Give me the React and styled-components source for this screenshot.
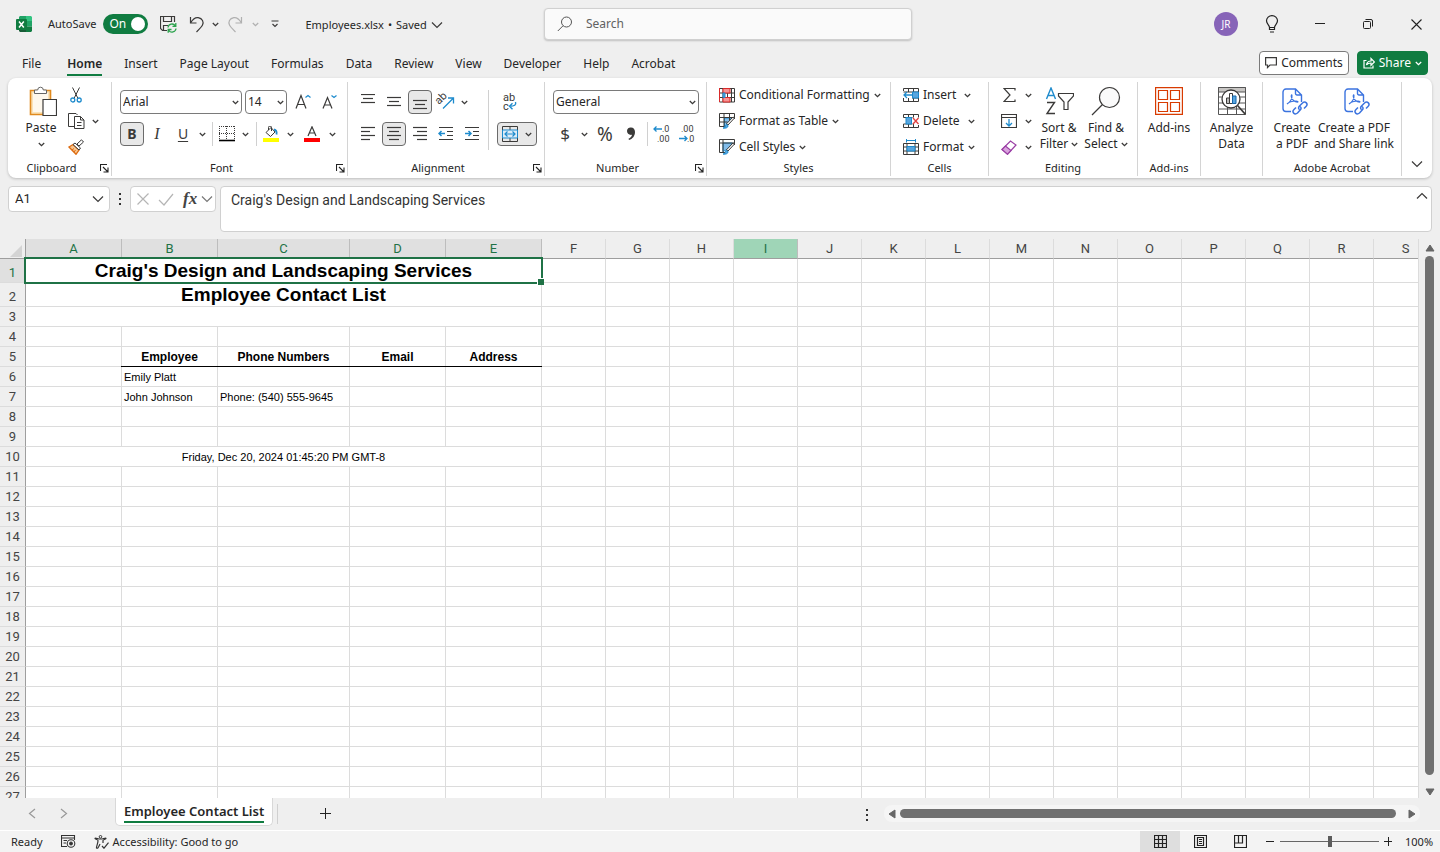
import React, { useState } from 'react';
import styled, { createGlobalStyle, css } from 'styled-components';

const DARK = '#3b3a39';
const BLUE = '#1e8bcd';
const GREEN = '#107c41';

/* ---------- icons ---------- */

const Svg = ({ w = 16, h = w, stroke = DARK, sw = 1, children }) => (
  <svg
    width={w}
    height={h}
    viewBox={`0 0 ${w} ${h}`}
    fill="none"
    stroke={stroke}
    strokeWidth={sw}
    aria-hidden="true"
  >
    {children}
  </svg>
);

const ChevronIcon = ({ color = DARK }) => (
  <Svg w={7} h={5} stroke={color} sw={1.3}>
    <path d="M.8 1l2.7 2.6L6.2 1" />
  </Svg>
);

const WideChevron = ({ color = DARK, up }) => (
  <Svg w={12} h={8} stroke={color} sw={1.2}>
    <path d={up ? 'M1 6.5L6 1.5l5 5' : 'M1 1.5l5 5 5-5'} />
  </Svg>
);

const ExcelIcon = () => (
  <Svg w={16} stroke="none">
    <path d="M4 0h6v8H3V1z" fill="#21a366" />
    <path d="M10 0h5l1 1v4h-6z" fill="#33c481" />
    <path d="M3 5h7v5H3z" fill="#107c41" />
    <path d="M10 5h6v5.500h-6z" fill="#21a366" />
    <path d="M3 10h7v6H4l-1-1z" fill="#185c37" />
    <path d="M10 10.500h6V15l-1 1h-5z" fill="#107c41" />
    <rect x="0" y="3" width="11" height="11" rx="1" fill="#107c41" />
    <path d="M3 5.500l4.800 6M7.800 5.500l-4.800 6" stroke="#fff" strokeWidth="1.500" />
  </Svg>
);

const SaveIcon = () => (
  <Svg w={17} h={17}>
    <path d="M7 14.500H2.500L.5 12.500V.5h14V6M3.500.5v5h8v-5M3.500 14.500V9.500H8" strokeWidth="1.200" />
    <path d="M8 11.500a4 4 0 0 1 7.300-1.700M15.800 7v3.300h-3.300M16 12.500a4 4 0 0 1-7.300 1.800M8.200 16.800v-3.300h3.300" stroke="#2ea44f" strokeWidth="1.300" />
  </Svg>
);

const UndoIcon = ({ flip, color = DARK }) => (
  <Svg w={16} h={17} stroke={color} sw={1.2}>
    <path
      d={
        flip
          ? 'M14.500 1v6h-6M14.200 6.500C12 3 9.500 1.200 6.800 1.700 2.500 2.500 1 6 2.500 9c1 2 3 4 6 7'
          : 'M1.500 1v6h6M1.800 6.500C4 3 6.500 1.200 9.200 1.700c4.300.8 5.800 4.300 4.300 7.300-1 2-3 4-6 7'
      }
    />
  </Svg>
);

const CustomizeIcon = () => (
  <Svg w={8} h={8} sw={1.2}>
    <path d="M.5 1h7M1.500 4L4 6.400 6.500 4" />
  </Svg>
);

const SearchIcon = () => (
  <Svg w={16} stroke="#555">
    <circle cx="9.500" cy="6" r="5" />
    <path d="M6 9.800L.8 15" />
  </Svg>
);

const BulbIcon = () => (
  <Svg w={14} h={18} stroke="#222" sw={1.2}>
    <path d="M4.500 12.500C4.500 10 1.500 9 1.500 5.800a5.500 5.200 0 0 1 11 0c0 3.200-3 4.200-3 6.700zM4.500 12.500v2h5v-2M5 17h4" />
  </Svg>
);

const PasteIcon = () => (
  <Svg w={32} h={31}>
    <g transform="translate(4 0)">
      <path d="M1.500 4.500h20v24h-20z" fill="#fbe3b8" stroke="#e08a1e" strokeWidth="1.600" />
      <path d="M4 7h15v19H4z" fill="#fff" stroke="none" opacity=".75" />
      <path d="M5.500 7.500V4h3.200a2.800 2.800 0 0 1 5.600 0h3.200v3.500z" fill="#fff" stroke="#666" />
      <path d="M14 13.500h13.500v16H14z" fill="#fff" stroke={DARK} strokeWidth="1.200" />
    </g>
  </Svg>
);

const CutIcon = () => (
  <Svg w={12} h={16}>
    <path d="M2.500.5l5.500 11M9.500.5L4 11.500" />
    <circle cx="2.800" cy="13" r="2" stroke={BLUE} strokeWidth="1.300" />
    <circle cx="9.200" cy="13" r="2" stroke={BLUE} strokeWidth="1.300" />
  </Svg>
);

const CopyIcon = () => (
  <Svg w={17} h={16}>
    <path d="M6 13.500H.5v-13H8l1.500 1.500" />
    <path d="M6.500 3.500h6l3.500 3.500v8.500H6.500zM12.500 3.500V7H16M9 9.500h4.500M9 12.500h4.500" />
  </Svg>
);

const BrushIcon = () => (
  <Svg w={16} h={16}>
    <path d="M1 8l4-2.500 6 5.500-3 4.300z" fill="#f7c690" stroke="#dd6b10" strokeWidth="1.300" />
    <path d="M4 11l2-1.500M6 13l1.500-2" stroke="#dd6b10" />
    <path d="M5 5.500l2-1.500 5.500 5-1.500 2zM9 5l4.500-4.200L15.500 3l-4.500 4z" fill="#fff" />
  </Svg>
);

const GrowFontIcon = ({ down }) => (
  <Svg w={17} h={16}>
    {down ? (
      <path d="M1 14.500L5.500 3.500l4.500 11M2.500 11h6" strokeWidth="1.200" />
    ) : (
      <path d="M1 14.500L6 1.500l5 13M2.700 10.500h6.600" strokeWidth="1.200" />
    )}
    <path d={down ? 'M9.500 1.500l2.500 2 2.500-2' : 'M10.500 3.500l2.500-2 2.500 2'} stroke={BLUE} strokeWidth="1.200" />
  </Svg>
);

const BorderIcon = () => (
  <Svg w={16}>
    <path d="M0 .5h16M0 7.500h16M.5 0v14M7.500 0v14M15.500 0v14" strokeDasharray="1 1" />
    <path d="M0 14.500h16" stroke="#000" strokeWidth="1.600" />
  </Svg>
);

const FillIcon = () => (
  <Svg w={16}>
    <path d="M3 6.500L8 1.500l4 4.500-4.500 4.500zM5.500 4V1.500a1.500 1.500 0 0 1 3 0V5" />
    <path d="M11 3.500c2.500.5 3 2 2.500 5" stroke={BLUE} strokeWidth="1.800" />
    <path d="M0 12h16v4H0z" fill="#ff0" stroke="none" />
  </Svg>
);

const FontColorIcon = () => (
  <Svg w={16}>
    <path d="M4 10L8 .8 12 10M5.500 7h5" strokeWidth="1.200" />
    <path d="M0 12h16v4H0z" fill="#f00" stroke="none" />
  </Svg>
);

const LinesIcon = ({ lines }) => (
  <Svg w={16}>
    {lines.map(([x, y, len]) => (
      <path key={y} d={`M${x} ${y}.5h${len}`} strokeWidth="1.200" />
    ))}
  </Svg>
);

const TOP = [[1, 0, 14], [3, 4, 10], [1, 8, 14]];
const MIDDLE = [[1, 3, 14], [3, 7, 10], [1, 11, 14]];
const BOTTOM = [[1, 6, 14], [3, 10, 10], [1, 14, 14]];
const LEFT = [[1, 1, 14], [1, 5, 9], [1, 9, 14], [1, 13, 9]];
const CENTER = [[1, 1, 14], [3, 5, 10], [1, 9, 14], [3, 13, 10]];
const RIGHT = [[1, 1, 14], [5, 5, 10], [1, 9, 14], [5, 13, 10]];

const OrientIcon = () => (
  <Svg w={22} h={24}>
    <text x="5" y="15" transform="rotate(-45 5 15)" fontFamily="Roboto" fontSize="11" fill={DARK} stroke="none">ab</text>
    <path d="M9 18.500L19 8.500M14 8h5.500v5.500" stroke={BLUE} strokeWidth="1.300" />
  </Svg>
);

const IndentIcon = ({ out }) => (
  <Svg w={16}>
    <path d="M1 1.500h14M9 5.500h6M9 9.500h6M1 13.500h14" strokeWidth="1.200" />
    <path d={out ? 'M7 7.500H1M3.500 5L1 7.500 3.500 10' : 'M1 7.500h6M4.500 5L7 7.500 4.500 10'} stroke={BLUE} strokeWidth="1.500" />
  </Svg>
);

const WrapIcon = () => (
  <Svg w={18} h={24}>
    <text x="3" y="11" fontFamily="Roboto" fontSize="11" fill={DARK} stroke="none">ab</text>
    <text x="3" y="20" fontFamily="Roboto" fontSize="11" fill={DARK} stroke="none">c</text>
    <path d="M15.500 12c1 3-1 4.200-6 4.200M12.500 13.300l-3 2.900 3 3" stroke={BLUE} strokeWidth="1.400" />
  </Svg>
);

const MergeIcon = () => (
  <Svg w={16}>
    <path d="M.5.5h15v15H.5zM8 .5V4M8 12v3.500" />
    <path d="M.5 4h15v8H.5z" fill="#dcecf8" stroke={BLUE} />
    <path d="M3 8h10M5.500 5.500L3 8l2.500 2.500M10.500 5.500L13 8l-2.500 2.500" stroke={BLUE} strokeWidth="1.200" />
  </Svg>
);

const DecimalIcon = ({ less }) => (
  <Svg w={20} h={22}>
    <text x={less ? 4 : 9} y="9" fontFamily="Roboto" fontSize="9" fill={DARK} stroke="none">{less ? '.00' : '.0'}</text>
    <text x={less ? 10 : 4} y="19" fontFamily="Roboto" fontSize="9" fill={DARK} stroke="none">{less ? '.0' : '.00'}</text>
    <path
      d={less ? 'M2 15.500h8M7.500 13L10 15.500 7.500 18' : 'M9 6H1M3.500 3.500L1 6l2.500 2.500'}
      stroke={BLUE}
      strokeWidth="1.300"
    />
  </Svg>
);

const CommaIcon = () => (
  <Svg w={10} h={14} stroke="none">
    <path d="M1 4a3.500 3.500 0 0 1 4-3.500c2.500 0 4 2 4 4.500 0 4-2.500 7-6 8l-.5-1.200C4.500 11 5.800 9.500 6 7.800 3 8.300 1 6.500 1 4z" fill={DARK} />
  </Svg>
);

const CondFormatIcon = () => (
  <Svg w={16} h={15}>
    <path d="M.5.5h15v13.500H.5zM.5 5h15M.5 9.500h15M4 .5V14M8.500.5V14M12.500.5V14" />
    <path d="M4 .5h7V5H4zM4 9.500h7V14H4z" fill="#f79292" stroke="#d92b2b" />
    <path d="M4 5h2v4.500H4z" fill="#58a6df" stroke={BLUE} />
    <path d="M.5 0v14" stroke="#d92b2b" />
  </Svg>
);

const TableBrushIcon = ({ grid }) => (
  <Svg w={16} h={16}>
    <path d="M15.500 6V.5H.5v13H6" />
    <path d={grid ? 'M5.500 5h7.500l-5 6v2.500H5.500z' : 'M4 4h9.500L8 10.500l-4 2z'} fill="#83bdea" stroke={BLUE} />
    {grid ? <path d="M.5 4.500h15M.5 9h8M5 .5v13M10.500.5v8" /> : <path d="M.5 4h15M4 .5v13" />}
    <path d="M15.500 5L9 12l-1.500-1.200L14 4z" fill="#fff" />
    <path d="M4 15c2 0 2-1 2.500-2.500S9 11.500 9 13s-2 2.500-5 2z" fill="#58a6df" stroke={BLUE} />
  </Svg>
);

const CellsIcon = ({ kind }) => (
  <Svg w={16} h={16}>
    {kind === 'insert' && (
      <>
        <path d="M.5 4V1.500h15v13H.5V11M.5 5h15M9 11h6.500M5.500 1.500V5M10.500 1.500V5M5.500 11v3.500M10.500 11v3.500" />
        <path d="M9.500 5h6v6h-6z" fill="#58a6df" stroke={BLUE} />
        <path d="M9 8H1M4 5L1 8l3 3" stroke={BLUE} strokeWidth="1.300" />
      </>
    )}
    {kind === 'delete' && (
      <>
        <path d="M.5 4.500v-3h15v3M.5 11v3.500h15V12M.5 4.500h9M.5 11h9M5.500 1.500v3M10.500 1.500v3M5.500 11v3.500M10.500 11v3.500" />
        <path d="M3 4.500h5.500V11H3z" fill="#58a6df" stroke={BLUE} />
        <path d="M10 5l5.500 6M15.500 5L10 11" stroke="#e04040" strokeWidth="1.300" />
      </>
    )}
    {kind === 'format' && (
      <>
        <path d="M.5 4.500h15v11H.5zM.5 8h15M.5 12h15M4 4.500v11M12 4.500v11" />
        <path d="M4 7.500h8V12H4z" fill="#58a6df" stroke={BLUE} />
        <path d="M3.500 0v3.500M12.500 0v3.500M3.500 1.500h9" stroke={BLUE} />
      </>
    )}
  </Svg>
);

const SumIcon = () => (
  <Svg w={13} h={14}>
    <path d="M12 2.500v-2H1l6 6.500-6 6.500h11v-2" strokeWidth="1.200" />
  </Svg>
);

const FillDownIcon = () => (
  <Svg w={16} h={14}>
    <path d="M.5.5h15v13H.5zM.5 3.500h15" strokeWidth="1.200" />
    <path d="M8 5v7M5 9l3 3 3-3" stroke={BLUE} strokeWidth="1.300" />
  </Svg>
);

const EraserIcon = () => (
  <Svg w={16} h={15} stroke="#9b3fa5" sw={1.2}>
    <path d="M1 9.500L9.500 1 15 5l-8.500 9.200z" fill="#fff" />
    <path d="M1 9.500L4.500 6l5.500 4.500-3.500 3.700z" fill="#d9a3de" />
  </Svg>
);

const SortFilterIcon = () => (
  <Svg w={29} h={28}>
    <path d="M1.500 12L6 1l4.500 11M3 8.500h6" stroke={BLUE} strokeWidth="1.400" />
    <path d="M2 15.500h7.500L2 26.500h8" strokeWidth="1.400" />
    <path d="M13.500 6.500h15V9l-5.500 6v7.500h-4V15l-5.500-6z" strokeWidth="1.200" />
  </Svg>
);

const FindIcon = () => (
  <Svg w={30} h={30}>
    <circle cx="18.500" cy="11.500" r="10" fill="#fafafa" strokeWidth="1.200" />
    <path d="M11.500 18.500L1 29" strokeWidth="1.300" />
  </Svg>
);

const AddinsIcon = () => (
  <Svg w={28} h={28} stroke="#d83b01" sw={1.2}>
    <path d="M.6.600h26.800v26.800H.6zM3.500 3.500h9v9h-9zM15.500 3.500h9v9h-9zM3.500 15.500h9v9h-9zM15.500 15.500h9v9h-9z" />
  </Svg>
);

const AnalyzeIcon = () => (
  <Svg w={28} h={28}>
    <path d="M.5.5h27v27H.5zM.5 10h27M.5 16h27M.5 22h27M9.500 16v11.500M18.500 16v11.500" stroke="#555" />
    <path d="M.5.5h27V5H.5z" fill="#c8c6c4" stroke="#555" />
    <circle cx="13" cy="12" r="9" fill="#fff" strokeWidth="1.300" />
    <path d="M8.500 11h3v5.500h-3z" fill="#bbb" />
    <path d="M11.500 6.500h3v10h-3z" fill="#fff" />
    <path d="M14.500 9h3.500v7.500h-3.500z" fill="#58a6df" stroke="#1565a8" />
    <path d="M19.500 18.500l8 9" strokeWidth="1.600" />
  </Svg>
);

const PdfIcon = () => (
  <Svg w={32} h={32} stroke="#3b73df" sw={1.4}>
    <g transform="translate(6 3)">
      <path d="M9 23.500H4A3 3 0 0 1 1 20.500V4a3 3 0 0 1 3-3h9.500l6 6v7M13.500 1v4.500a1.500 1.500 0 0 0 1.500 1.500h4.500" />
      <path d="M5 16c3-1.500 5.500-5.500 5-8.500-.3-1.500-1.300 0-.5 2 1 2.500 3.500 4.500 6 4.700 1 0 .5-1.200-1.500-1.200-3 0-6.500.5-9 3z" strokeWidth="1.100" />
      <path d="M17.500 21.500c-1.500-1-1-2.500 0-3.500l3-3c3-2.500 6 1 3.500 3.500l-2 2M18 18.500c1.500 1 1.300 2.500.2 3.500l-2.700 3c-3 2.500-6-1-3.500-3.500l2-2" strokeWidth="1.500" />
    </g>
  </Svg>
);

const LauncherIcon = () => (
  <Svg w={9} h={9} sw={1.1}>
    <path d="M.5 7V.5H7M3 3l4.500 4.500M8 3.500V8H3.500" stroke="#222" />
  </Svg>
);

const CommentIcon = () => (
  <Svg w={12} h={12}>
    <path d="M.6.600h10.800v7.400H5L2.500 10.500V8H.6z" strokeWidth="1.200" />
  </Svg>
);

const ShareIcon = () => (
  <Svg w={12} h={12} stroke="#fff" sw={1.2}>
    <path d="M3.500 3.500H1V11h9V8.500M3.500 8c.3-2.500 1.800-4 4.500-4V1.500L11.500 5 8 8.300V6C6 6 4.500 6.500 3.500 8z" />
  </Svg>
);

const MacroIcon = () => (
  <Svg w={15} h={13} stroke="#333">
    <path d="M6 11.500H.5V.5h13V5M.5 3h13M2.500 5.500H6M2.500 8H5" strokeWidth="1.100" />
    <circle cx="10" cy="8.500" r="3.800" strokeWidth="1.100" />
    <circle cx="10" cy="8.500" r="1.500" fill="#333" />
  </Svg>
);

const AccessIcon = () => (
  <Svg w={15} h={14} stroke="#333">
    <circle cx="6.500" cy="1.800" r="1.300" />
    <path d="M1 3c-.5 1.500 3 1.500 3 2.500 0 3-1.500 5-1.500 7.500 1.500 1 2-1 3.500-4M12 3c.5 1.500-3 1.500-3 2.500V8M1 3c2 0 3 1 5.500 1S10 3 12 3M8 11l2 2.200 4.500-5.500" strokeWidth="1.200" />
  </Svg>
);

/* ---------- shared ---------- */

const GlobalStyle = createGlobalStyle`
  * { box-sizing: border-box; }
  body {
    margin: 0;
    overflow: hidden;
    background: #efefef;
    color: #262626;
    font: 12px/16px "Noto Sans", sans-serif;
  }
  button, input, select, textarea {
    font: inherit;
    color: inherit;
    border: 0;
    padding: 0;
    margin: 0;
    background: none;
    outline: none;
  }
  svg { display: block; flex: none; }
`;

const Window = styled.div`
  display: flex;
  flex-direction: column;
  height: 100vh;
`;

const IconButton = styled.button`
  display: flex;
  align-items: center;
  justify-content: center;
  flex: none;
  width: ${({ $w }) => $w || 24}px;
  height: 24px;
  border-radius: 4px;
  ${({ $on }) =>
    $on &&
    css`
      background: #e8e8e8;
      border: 1px solid #6b6b6b;
    `}
`;

/* ---------- title bar ---------- */

const TitleBar = styled.header`
  display: grid;
  grid-template-columns: 1fr minmax(180px, 368px) 1fr;
  align-items: center;
  height: 48px;
  padding-left: 16px;
`;

const TitleLeft = styled.div`
  display: flex;
  align-items: center;
  white-space: nowrap;
`;

const AutoSave = styled.label`
  display: flex;
  align-items: center;
  gap: 7px;
  margin: 0 10px 0 16px;
  font-size: 11px;
`;

const Toggle = styled.span`
  display: flex;
  align-items: center;
  justify-content: space-between;
  width: 45px;
  height: 20px;
  padding: 0 3px 0 6px;
  border-radius: 10px;
  background: ${GREEN};
  color: #fff;
  font-size: 12px;

  input {
    appearance: none;
    width: 14px;
    height: 14px;
    border-radius: 50%;
    background: #fff;
  }
`;

const QuickTools = styled.div`
  display: flex;
  align-items: center;
  gap: 5px;
  margin: 0 19px 0 10px;
`;

const FileName = styled.button`
  display: flex;
  align-items: center;
  gap: 4px;
  padding-top: 1px;
  font-size: 11px;
`;

const SearchBox = styled.label`
  display: flex;
  align-items: center;
  gap: 13px;
  height: 32px;
  padding: 0 12px;
  border: 1px solid #d0d0d0;
  border-radius: 4px;
  background: #fafafa;
  box-shadow: 0 1px 2px rgba(0, 0, 0, 0.2);

  input {
    flex: 1;
    min-width: 0;
    font-size: 12px;
  }
  input::placeholder {
    color: #616161;
    opacity: 1;
  }
`;

const TitleRight = styled.div`
  display: flex;
  justify-content: flex-end;
  align-items: center;
`;

const Avatar = styled.button`
  width: 24px;
  height: 24px;
  margin-right: 10px;
  border-radius: 50%;
  background: #8764b8;
  color: #fff;
  font-size: 10px;
`;

/* ---------- ribbon tabs ---------- */

const TabRow = styled.nav`
  display: flex;
  align-items: flex-end;
  height: 30px;
  padding: 0 12px 0 11px;
`;

const Tab = styled.button`
  height: 28px;
  padding: 0 11px;
  white-space: nowrap;
  font-weight: ${({ $active }) => ($active ? 600 : 400)};
  margin-right: ${({ $first }) => ($first ? 4 : 0)}px;

  span {
    display: block;
    padding: 4px 0 2px;
    border-bottom: 2px solid ${({ $active }) => ($active ? GREEN : 'transparent')};
  }
`;

const Actions = styled.div`
  display: flex;
  gap: 8px;
  margin: 0 0 3px auto;
`;

const ActionButton = styled.button`
  display: flex;
  align-items: center;
  gap: 4px;
  height: 24px;
  padding: 0 5px;
  border: 1px solid ${({ $primary }) => ($primary ? GREEN : '#7a7a7a')};
  border-radius: 4px;
  background: ${({ $primary }) => ($primary ? GREEN : '#fff')};
  color: ${({ $primary }) => ($primary ? '#fff' : '#262626')};
`;

/* ---------- ribbon ---------- */

const RibbonBar = styled.section`
  display: flex;
  flex: none;
  margin: 0 8px;
  padding: 4px 0 2px;
  border-radius: 8px;
  background: #fff;
  box-shadow: 0 1px 3px rgba(0, 0, 0, 0.22);
`;

const GroupBox = styled.div`
  display: flex;
  flex-direction: column;
  flex: none;
  width: ${({ $w }) => $w}px;
  border-right: 1px solid #d4d4d4;
`;

const GroupBody = styled.div`
  display: flex;
  justify-content: ${({ $center }) => ($center ? 'center' : 'flex-start')};
  height: 78px;
  padding-left: ${({ $pad = 8 }) => $pad}px;
`;

const GroupFooter = styled.div`
  display: flex;
  align-items: center;
  height: 16px;
  font-size: 11px;
  text-align: center;
  white-space: nowrap;

  span { flex: 1; }
  button {
    display: flex;
    justify-content: flex-end;
    width: 16px;
    padding-right: 2px;
  }
`;

const Group = ({ w, label, launcher, pad, center, children }) => (
  <GroupBox $w={w}>
    <GroupBody $pad={pad} $center={center}>{children}</GroupBody>
    <GroupFooter>
      <span>{label}</span>
      {launcher && (
        <button aria-label={`${label} settings`}>
          <LauncherIcon />
        </button>
      )}
    </GroupFooter>
  </GroupBox>
);

const TwoRows = styled.div`
  display: flex;
  flex-direction: column;
  gap: 8px;
  padding: 8px 0 0 ${({ $pad = 0 }) => $pad}px;
`;

const ThreeRows = styled.div`
  display: flex;
  flex-direction: column;
  height: 78px;
`;

const Row = styled.div`
  display: flex;
  align-items: center;
  flex: none;
  gap: ${({ $gap = 0 }) => $gap}px;
  height: ${({ $h = 24 }) => $h}px;
`;

const Divider = styled.i`
  flex: none;
  width: 1px;
  height: ${({ $h = 24 }) => $h}px;
  margin: ${({ $top = 0 }) => $top}px 3px 0 4px;
  background: #d0d0d0;
`;

const Letter = styled.span`
  font-size: ${({ $size = 14 }) => $size}px;
  font-weight: ${({ $bold }) => ($bold ? 700 : 400)};
  font-style: ${({ $italic }) => ($italic ? 'italic' : 'normal')};
  font-family: ${({ $italic }) => ($italic ? '"Liberation Serif", serif' : 'inherit')};
  text-decoration: ${({ $underline }) => ($underline ? 'underline' : 'none')};
  text-underline-offset: 2px;
  color: ${DARK};
`;

const ComboBox = styled.div`
  display: grid;
  grid-template-columns: 1fr 9px;
  align-items: center;
  width: ${({ $w }) => $w}px;
  height: 24px;
  border: 1px solid #7a7a7a;
  border-radius: 4px;

  select {
    grid-area: 1 / 1 / 2 / 3;
    appearance: none;
    height: 22px;
    padding-left: 2px;
  }
  svg {
    grid-area: 1 / 2;
    pointer-events: none;
  }
`;

const Combo = ({ w, value, label }) => (
  <ComboBox $w={w}>
    <select aria-label={label} defaultValue={value}>
      <option>{value}</option>
    </select>
    <ChevronIcon />
  </ComboBox>
);

const Drop = ({ label, w = 14, color }) => (
  <IconButton $w={w} aria-label={label}>
    <ChevronIcon color={color} />
  </IconButton>
);

const MenuButton = styled.button`
  display: flex;
  align-items: center;
  gap: 4px;
  height: 26px;
  width: ${({ $w }) => ($w ? `${$w}px` : 'auto')};
  white-space: nowrap;

  svg:last-child {
    margin-left: ${({ $w }) => ($w ? 'auto' : 0)};
  }
`;

const BigButton = styled.button`
  display: flex;
  flex-direction: column;
  align-items: center;
  width: ${({ $w }) => $w}px;
  white-space: nowrap;
`;

const BigIcon = styled.span`
  display: flex;
  align-items: center;
  height: 38px;
`;

const Line = styled.span`
  display: flex;
  align-items: center;
  gap: 3px;
  height: 16px;
`;

const RibbonEnd = styled.div`
  display: flex;
  flex: 1;
  align-items: flex-end;
  justify-content: center;
`;

/* ---------- formula bar ---------- */

const FormulaRow = styled.div`
  display: flex;
  align-items: flex-start;
  flex: none;
  height: 61px;
  padding: 8px 8px 0;
  font-family: Roboto, sans-serif;
  font-size: 13px;
`;

const Field = styled.div`
  display: flex;
  align-items: center;
  width: ${({ $w }) => $w}px;
  height: 26px;
  padding: 0 5px 0 6px;
  border: 1px solid #d0d0d0;
  border-radius: 4px;
  background: #fff;

  input {
    flex: 1;
    min-width: 0;
  }
`;

const Dots = styled.span`
  display: grid;
  gap: 3px;
  width: ${({ $w }) => $w}px;
  padding-top: ${({ $top = 0 }) => $top}px;
  justify-content: center;

  i {
    width: 2px;
    height: 2px;
    background: #333;
  }
`;

const Fx = styled.span`
  font: italic bold 17px/20px "Liberation Serif", serif;
  color: #444;
`;

const FormulaField = styled.div`
  display: flex;
  flex: 1;
  align-items: flex-start;
  height: 46px;
  margin-left: 4px;
  padding: 5px 3px 0 10px;
  border: 1px solid #d0d0d0;
  border-radius: 4px;
  background: #fff;

  textarea {
    flex: 1;
    height: 34px;
    resize: none;
    font-size: 14px;
    color: #333;
  }
`;

/* ---------- sheet ---------- */

const Workspace = styled.main`
  display: flex;
  flex: 1;
  min-height: 0;
`;

const SheetView = styled.div`
  flex: 1;
  min-width: 0;
  overflow: hidden;
  background: #fff;
`;

const Grid = styled.table`
  width: 1438px;
  table-layout: fixed;
  border-collapse: separate;
  border-spacing: 0;
`;

const ColHead = styled.th`
  height: 20px;
  padding: 1px 0 0;
  border-right: 1px solid ${({ $state }) => ($state ? '#bdbdbd' : '#dcdcdc')};
  border-bottom: 1px solid #9e9e9e;
  background: ${({ $state }) =>
    $state === 'hover' ? '#9fd5b7' : $state === 'on' ? '#e0e0e0' : '#efefef'};
  color: ${({ $state }) => ($state ? '#1f7246' : '#444')};
  font: 400 13px/18px Roboto, sans-serif;
`;

const Corner = styled(ColHead)`
  border-right-color: #9e9e9e;

  svg { margin: 4px 0 0 10px; }
`;

const RowHead = styled.th`
  height: ${({ $h }) => $h}px;
  padding: ${({ $h }) => ($h > 20 ? 5 : 1)}px 0 0;
  border-right: 1px solid #9e9e9e;
  border-bottom: 1px solid #dcdcdc;
  background: ${({ $on }) => ($on ? '#e0e0e0' : '#efefef')};
  color: ${({ $on }) => ($on ? '#1f7246' : '#444')};
  font: 400 13px/18px Roboto, sans-serif;
`;

const Cell = styled.td`
  position: relative;
  padding: 1px 2px 0;
  border-right: 1px solid #dcdcdc;
  border-bottom: 1px solid #dcdcdc;
  color: #000;
  text-align: ${({ $center }) => ($center ? 'center' : 'left')};
  font: ${({ $bold }) => ($bold ? 700 : 400)} ${({ $size = 11 }) => $size}px/18px "Liberation Sans", Arial, sans-serif;
  white-space: nowrap;
  ${({ $rule }) =>
    $rule &&
    css`
      &::after {
        content: '';
        position: absolute;
        inset: auto -1px -1px -1px;
        height: 1px;
        background: #000;
      }
    `}
`;

const Selection = styled.span`
  position: absolute;
  inset: -2px;
  border: 2px solid #1f7246;
  pointer-events: none;
  z-index: 1;

  &::after {
    content: '';
    position: absolute;
    right: -3px;
    bottom: -3px;
    width: 6px;
    height: 6px;
    border: solid #fff;
    border-width: 1px 0 0 1px;
    background: #1f7246;
  }
`;

const VScroll = styled.div`
  display: flex;
  flex-direction: column;
  align-items: center;
  width: 22px;
  padding-top: 5px;
  border-left: 1px solid #dcdcdc;
`;

const Thumb = styled.div`
  flex: 1;
  border-radius: 5px;
  background: #707070;
  ${({ $vertical }) => ($vertical ? 'width: 9px; margin: 4px 0 13px;' : 'height: 9px; margin: 0 12px 0 4px;')}
`;

const VArrow = styled.div`
  padding-bottom: 2px;
`;

/* ---------- bottom bars ---------- */

const SheetTabs = styled.div`
  display: flex;
  align-items: flex-start;
  flex: none;
  height: 32px;
  padding-left: 16px;
`;

const NavButton = styled.button`
  display: flex;
  align-items: center;
  justify-content: center;
  width: 32px;
  height: 31px;
`;

const SheetTab = styled.button`
  height: 28px;
  padding: 0 8px;
  margin-left: 35px;
  border: 1px solid #d8d8d8;
  border-top: 0;
  border-radius: 0 0 5px 5px;
  background: #fff;
  font-size: 13px;
  font-weight: 600;
  white-space: nowrap;

  span {
    display: block;
    padding: 3px 0 2px;
    border-bottom: 2px solid ${GREEN};
  }
`;

const AddSheet = styled(NavButton)`
  margin-left: 28px;
`;

const SplitHandle = styled.div`
  display: flex;
  align-items: center;
  height: 33px;
  margin-left: auto;
`;

const HScroll = styled.div`
  display: flex;
  align-items: center;
  width: 536px;
  height: 17px;
  margin: 7px 20px 0 7px;
  padding: 0 4px;
  border-radius: 8px;
  background: #f5f5f5;
`;

const StatusBar = styled.footer`
  display: flex;
  align-items: center;
  flex: none;
  height: 22px;
  padding-left: 11px;
  border-top: 1px solid #fff;
  background: #f3f3f3;
  font-size: 11px;
`;

const StatusItem = styled.span`
  display: flex;
  align-items: center;
  gap: 4px;
  margin-right: 18px;
`;

const ViewControls = styled.div`
  display: flex;
  align-items: center;
  margin-left: auto;
`;

const ViewButton = styled.button`
  display: flex;
  align-items: center;
  justify-content: center;
  width: 40px;
  height: 21px;
  background: ${({ $on }) => ($on ? '#dedede' : 'transparent')};
`;

const ZoomGroup = styled.div`
  display: flex;
  align-items: center;
  padding-left: 6px;
`;

const ZoomRange = styled.input`
  appearance: none;
  width: 99px;
  height: 13px;
  margin: 0 5px;
  background: linear-gradient(#666, #666) center / 100% 1px no-repeat;

  &::-webkit-slider-thumb {
    appearance: none;
    width: 4px;
    height: 11px;
    background: #5c5c5c;
  }
`;

const Percent = styled.span`
  width: 47px;
  padding-left: 12px;
`;

/* ---------- data ---------- */

const TABS = ['File', 'Home', 'Insert', 'Page Layout', 'Formulas', 'Data', 'Review', 'View', 'Developer', 'Help', 'Acrobat'];

const COLUMNS = [
  ['A', 96], ['B', 96], ['C', 132], ['D', 96], ['E', 96],
  ...'FGHIJKLMNOPQRS'.split('').map((c) => [c, 64]),
];

const MERGED = {
  1: { text: "Craig's Design and Landscaping Services", size: 19, bold: true },
  2: { text: 'Employee Contact List', size: 19, bold: true },
  3: { text: '' },
  10: { text: 'Friday, Dec 20, 2024 01:45:20 PM GMT-8' },
};

const VALUES = {
  B5: 'Employee',
  C5: 'Phone Numbers',
  D5: 'Email',
  E5: 'Address',
  B6: 'Emily Platt',
  B7: 'John Johnson',
  C7: 'Phone: (540) 555-9645',
};

const ROWS = Array.from({ length: 27 }, (_, i) => i + 1);

const columnState = (name) => {
  if (name === 'I') return 'hover';
  return 'ABCDE'.includes(name) ? 'on' : undefined;
};

const ThreeDots = ({ w, top }) => (
  <Dots $w={w} $top={top}>
    <i /><i /><i />
  </Dots>
);

const Ribbon = () => (
  <RibbonBar>
    <Group w={104} label="Clipboard" launcher>
      <BigButton $w={50}>
        <BigIcon><PasteIcon /></BigIcon>
        <Line>Paste</Line>
        <Line><ChevronIcon /></Line>
      </BigButton>
      <ThreeRows>
        <Row $h={26}><IconButton $w={20} aria-label="Cut"><CutIcon /></IconButton></Row>
        <Row $h={26}>
          <IconButton $w={20} aria-label="Copy"><CopyIcon /></IconButton>
          <Drop label="Copy options" w={18} />
        </Row>
        <Row $h={26}><IconButton $w={20} aria-label="Format Painter"><BrushIcon /></IconButton></Row>
      </ThreeRows>
    </Group>

    <Group w={236} label="Font" launcher>
      <TwoRows>
        <Row $gap={3}>
          <Combo w={122} value="Arial" label="Font" />
          <Combo w={42} value="14" label="Font size" />
          <IconButton $w={26} aria-label="Increase font size"><GrowFontIcon /></IconButton>
          <IconButton $w={22} aria-label="Decrease font size"><GrowFontIcon down /></IconButton>
        </Row>
        <Row>
          <IconButton $on><Letter $bold>B</Letter></IconButton>
          <IconButton $w={26}><Letter $italic $size={16}>I</Letter></IconButton>
          <IconButton $w={26}><Letter $underline $size={14}>U</Letter></IconButton>
          <Drop label="Underline options" w={12} />
          <Divider />
          <IconButton $w={22} aria-label="Borders"><BorderIcon /></IconButton>
          <Drop label="Border options" />
          <Divider />
          <IconButton $w={22} aria-label="Fill color"><FillIcon /></IconButton>
          <Drop label="Fill color options" w={16} />
          <IconButton $w={28} aria-label="Font color"><FontColorIcon /></IconButton>
          <Drop label="Font color options" w={12} />
        </Row>
      </TwoRows>
    </Group>

    <Group w={197} label="Alignment" launcher>
      <TwoRows>
        <Row $gap={2}>
          <IconButton aria-label="Top align"><LinesIcon lines={TOP} /></IconButton>
          <IconButton aria-label="Middle align"><LinesIcon lines={MIDDLE} /></IconButton>
          <IconButton $on aria-label="Bottom align"><LinesIcon lines={BOTTOM} /></IconButton>
          <IconButton $w={22} aria-label="Orientation"><OrientIcon /></IconButton>
          <Drop label="Orientation options" w={12} />
        </Row>
        <Row $gap={2}>
          <IconButton aria-label="Align left"><LinesIcon lines={LEFT} /></IconButton>
          <IconButton $on aria-label="Center"><LinesIcon lines={CENTER} /></IconButton>
          <IconButton aria-label="Align right"><LinesIcon lines={RIGHT} /></IconButton>
          <IconButton aria-label="Decrease indent"><IndentIcon out /></IconButton>
          <IconButton aria-label="Increase indent"><IndentIcon /></IconButton>
        </Row>
      </TwoRows>
      <Divider $h={60} $top={8} />
      <TwoRows $pad={5}>
        <IconButton aria-label="Wrap text"><WrapIcon /></IconButton>
        <IconButton $w={40} $on aria-label="Merge and center">
          <Row $gap={7}><MergeIcon /><ChevronIcon /></Row>
        </IconButton>
      </TwoRows>
    </Group>

    <Group w={162} label="Number" launcher>
      <TwoRows>
        <Combo w={146} value="General" label="Number format" />
        <Row>
          <IconButton><Letter $size={17}>$</Letter></IconButton>
          <Drop label="Accounting format options" />
          <IconButton $w={28}><Letter $size={19}>%</Letter></IconButton>
          <IconButton aria-label="Comma style"><CommaIcon /></IconButton>
          <Divider />
          <IconButton aria-label="Increase decimal"><DecimalIcon /></IconButton>
          <IconButton aria-label="Decrease decimal"><DecimalIcon less /></IconButton>
        </Row>
      </TwoRows>
    </Group>

    <Group w={184} label="Styles" pad={12}>
      <ThreeRows>
        <MenuButton><CondFormatIcon />Conditional Formatting<ChevronIcon /></MenuButton>
        <MenuButton><TableBrushIcon grid />Format as Table<ChevronIcon /></MenuButton>
        <MenuButton><TableBrushIcon />Cell Styles<ChevronIcon /></MenuButton>
      </ThreeRows>
    </Group>

    <Group w={98} label="Cells" pad={12}>
      <ThreeRows>
        <MenuButton $w={68}><CellsIcon kind="insert" />Insert<ChevronIcon /></MenuButton>
        <MenuButton $w={72}><CellsIcon kind="delete" />Delete<ChevronIcon /></MenuButton>
        <MenuButton $w={68}><CellsIcon kind="format" />Format<ChevronIcon /></MenuButton>
      </ThreeRows>
    </Group>

    <Group w={149} label="Editing">
      <ThreeRows>
        <Row $h={26}><IconButton aria-label="Sum"><SumIcon /></IconButton><Drop label="Sum options" /></Row>
        <Row $h={26}><IconButton aria-label="Fill"><FillDownIcon /></IconButton><Drop label="Fill options" /></Row>
        <Row $h={26}><IconButton aria-label="Clear"><EraserIcon /></IconButton><Drop label="Clear options" /></Row>
      </ThreeRows>
      <BigButton $w={48}>
        <BigIcon><SortFilterIcon /></BigIcon>
        <Line>Sort &amp;</Line>
        <Line>Filter<ChevronIcon /></Line>
      </BigButton>
      <BigButton $w={46}>
        <BigIcon><FindIcon /></BigIcon>
        <Line>Find &amp;</Line>
        <Line>Select<ChevronIcon /></Line>
      </BigButton>
    </Group>

    <Group w={63} label="Add-ins" pad={0} center>
      <BigButton $w={56}>
        <BigIcon><AddinsIcon /></BigIcon>
        <Line>Add-ins</Line>
      </BigButton>
    </Group>

    <Group w={62} label="" pad={0} center>
      <BigButton $w={56}>
        <BigIcon><AnalyzeIcon /></BigIcon>
        <Line>Analyze</Line>
        <Line>Data</Line>
      </BigButton>
    </Group>

    <Group w={139} label="Adobe Acrobat">
      <BigButton $w={42}>
        <BigIcon><PdfIcon /></BigIcon>
        <Line>Create</Line>
        <Line>a PDF</Line>
      </BigButton>
      <BigButton $w={82}>
        <BigIcon><PdfIcon /></BigIcon>
        <Line>Create a PDF</Line>
        <Line>and Share link</Line>
      </BigButton>
    </Group>

    <RibbonEnd>
      <IconButton aria-label="Collapse ribbon"><WideChevron /></IconButton>
    </RibbonEnd>
  </RibbonBar>
);

const Sheet = () => (
  <SheetView>
    <Grid>
      <colgroup>
        <col style={{ width: 26 }} />
        {COLUMNS.map(([name, width]) => (
          <col key={name} style={{ width }} />
        ))}
      </colgroup>
      <thead>
        <tr>
          <Corner>
            <Svg w={12} h={12} stroke="none">
              <path d="M12 0v12H0z" fill="#d4d4d4" />
            </Svg>
          </Corner>
          {COLUMNS.map(([name]) => (
            <ColHead key={name} $state={columnState(name)}>{name}</ColHead>
          ))}
        </tr>
      </thead>
      <tbody>
        {ROWS.map((row) => {
          const merged = MERGED[row];
          return (
            <tr key={row}>
              <RowHead $h={row < 3 ? 24 : 20} $on={row === 1}>{row}</RowHead>
              {merged && (
                <Cell colSpan={5} $center $bold={merged.bold} $size={merged.size}>
                  {merged.text}
                  {row === 1 && <Selection />}
                </Cell>
              )}
              {COLUMNS.slice(merged ? 5 : 0).map(([name]) => (
                <Cell
                  key={name}
                  $center={row === 5}
                  $bold={row === 5}
                  $size={row === 5 ? 12 : 11}
                  $rule={row === 5 && 'BCDE'.includes(name)}
                >
                  {VALUES[name + row]}
                </Cell>
              ))}
            </tr>
          );
        })}
      </tbody>
    </Grid>
  </SheetView>
);

const Arrow = ({ d, w = 10, h = 8 }) => (
  <Svg w={w} h={h} stroke="#666">
    <path d={d} fill="#666" strokeLinejoin="round" />
  </Svg>
);

const App = () => {
  const [autoSave, setAutoSave] = useState(true);
  const [formula, setFormula] = useState("Craig's Design and Landscaping Services");
  const [zoom, setZoom] = useState(100);

  return (
    <Window>
      <GlobalStyle />
      <TitleBar>
        <TitleLeft>
          <ExcelIcon />
          <AutoSave>
            AutoSave
            <Toggle>
              {autoSave ? 'On' : 'Off'}
              <input type="checkbox" checked={autoSave} onChange={() => setAutoSave(!autoSave)} />
            </Toggle>
          </AutoSave>
          <IconButton $w={20} aria-label="Save"><SaveIcon /></IconButton>
          <QuickTools>
            <IconButton $w={18} aria-label="Undo"><UndoIcon /></IconButton>
            <Drop label="Undo options" w={8} />
            <IconButton $w={22} aria-label="Redo"><UndoIcon flip color="#b0b0b0" /></IconButton>
            <Drop label="Redo options" w={8} color="#b0b0b0" />
            <IconButton $w={22} aria-label="Customize Quick Access Toolbar"><CustomizeIcon /></IconButton>
          </QuickTools>
          <FileName>
            <span>Employees.xlsx</span>
            <span>•</span>
            <span>Saved</span>
            <WideChevron />
          </FileName>
        </TitleLeft>
        <SearchBox>
          <SearchIcon />
          <input type="search" placeholder="Search" aria-label="Search" />
        </SearchBox>
        <TitleRight>
          <Avatar>JR</Avatar>
          <IconButton $w={48} aria-label="Tips"><BulbIcon /></IconButton>
          <IconButton $w={48} aria-label="Minimize">
            <Svg w={10} stroke="#222"><path d="M0 4.500h10" /></Svg>
          </IconButton>
          <IconButton $w={48} aria-label="Restore">
            <Svg w={10} stroke="#222">
              <rect x=".5" y="2.500" width="7" height="7" rx="1" />
              <path d="M2.500.5H8A1.500 1.500 0 0 1 9.500 2v5.500" />
            </Svg>
          </IconButton>
          <IconButton $w={48} aria-label="Close">
            <Svg w={11} stroke="#222" sw={1.1}><path d="M.5.5l10 10M10.500.5l-10 10" /></Svg>
          </IconButton>
        </TitleRight>
      </TitleBar>

      <TabRow>
        {TABS.map((tab, i) => (
          <Tab key={tab} $active={tab === 'Home'} $first={i === 0}>
            <span>{tab}</span>
          </Tab>
        ))}
        <Actions>
          <ActionButton><CommentIcon />Comments</ActionButton>
          <ActionButton $primary><ShareIcon />Share<ChevronIcon color="#fff" /></ActionButton>
        </Actions>
      </TabRow>

      <Ribbon />

      <FormulaRow>
        <Field $w={102}>
          <input defaultValue="A1" aria-label="Name box" />
          <WideChevron />
        </Field>
        <ThreeDots w={20} top={7} />
        <Field $w={86}>
          <Row $gap={9}>
            <Svg w={12} stroke="#b5b5b5" sw={1.2}><path d="M.5.5l11 11M11.500.5l-11 11" /></Svg>
            <Svg w={16} h={13} stroke="#b5b5b5" sw={1.2}><path d="M1 7l5 5L15 1" /></Svg>
            <Row $gap={4}>
              <Fx>fx</Fx>
              <WideChevron color="#777" />
            </Row>
          </Row>
        </Field>
        <FormulaField>
          <textarea value={formula} onChange={(e) => setFormula(e.target.value)} aria-label="Formula bar" />
          <WideChevron up />
        </FormulaField>
      </FormulaRow>

      <Workspace>
        <Sheet />
        <VScroll>
          <Arrow d="M5 1l4 6H1z" />
          <Thumb $vertical />
          <VArrow><Arrow d="M5 7L1 1h8z" /></VArrow>
        </VScroll>
      </Workspace>

      <SheetTabs>
        <NavButton aria-label="Previous sheet">
          <Svg w={8} h={11} stroke="#999" sw={1.2}><path d="M7 1L1.500 5.500 7 10" /></Svg>
        </NavButton>
        <NavButton aria-label="Next sheet">
          <Svg w={8} h={11} stroke="#999" sw={1.2}><path d="M1 1l5.500 4.500L1 10" /></Svg>
        </NavButton>
        <SheetTab><span>Employee Contact List</span></SheetTab>
        <Divider $h={20} $top={6} />
        <AddSheet aria-label="New sheet">
          <Svg w={11} stroke="#222"><path d="M5.500 0v11M0 5.500h11" /></Svg>
        </AddSheet>
        <SplitHandle>
          <ThreeDots w={20} />
        </SplitHandle>
        <HScroll>
          <Arrow w={8} h={10} d="M7 1v8L1 5z" />
          <Thumb />
          <Arrow w={8} h={10} d="M1 1v8l6-4z" />
        </HScroll>
      </SheetTabs>

      <StatusBar>
        <StatusItem>Ready</StatusItem>
        <StatusItem><MacroIcon /></StatusItem>
        <StatusItem><AccessIcon />Accessibility: Good to go</StatusItem>
        <ViewControls>
          <ViewButton $on aria-label="Normal view">
            <Svg w={13} stroke="#222" sw={1.2}><path d="M.5.5h12v12H.5zM.5 4.500h12M.5 8.500h12M4.500.5v12M8.500.5v12" /></Svg>
          </ViewButton>
          <ViewButton aria-label="Page layout view">
            <Svg w={13} stroke="#222" sw={1.2}><path d="M.5.5h12v12H.5zM3.500 2.500h6v8h-6zM5 4.500h3M5 6.500h3M5 8.500h3" /></Svg>
          </ViewButton>
          <ViewButton aria-label="Page break preview">
            <Svg w={13} stroke="#222" sw={1.2}><path d="M.5.5h12v12H.5zM4.500.5V8H.5M8.500.5V8H4.500" /></Svg>
          </ViewButton>
          <ZoomGroup>
            <Svg w={9} stroke="#222"><path d="M0 4.500h8" /></Svg>
            <ZoomRange
              type="range"
              min="0"
              max="200"
              value={zoom}
              onChange={(e) => setZoom(Number(e.target.value))}
              aria-label="Zoom"
            />
            <Svg w={9} stroke="#222"><path d="M0 4.500h8M4.500 0v9" /></Svg>
            <Percent>{zoom}%</Percent>
          </ZoomGroup>
        </ViewControls>
      </StatusBar>
    </Window>
  );
};

export default App;
